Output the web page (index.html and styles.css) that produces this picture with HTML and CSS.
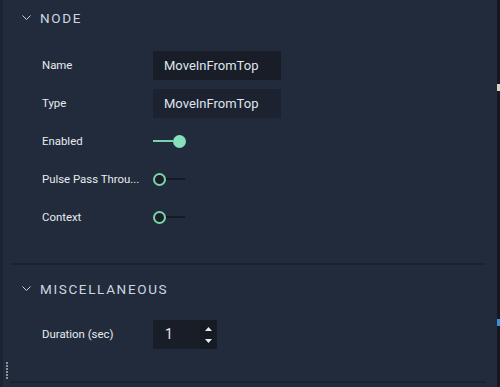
FILE: index.html
```html
<!DOCTYPE html>
<html lang="en">
<head>
    <meta charset="UTF-8">
    <title>Inspector</title>
    <link rel="stylesheet" href="styles.css">
</head>
<body>
    <div class="inspector">
        <div class="edge-left">
            <span class="grip"></span>
        </div>
        <div class="content">
            <div class="section">
                <div class="section-head">
                    <svg class="chevron" width="9" height="6" viewBox="0 0 9 6"><path d="M0.5 0.5 L4.5 4.5 L8.5 0.5" fill="none" stroke="#c9d3de" stroke-width="1"/></svg>
                    <span>NODE</span>
                </div>
                <div class="rows">
                    <div class="row">
                        <label>Name</label>
                        <div class="field">MoveInFromTop</div>
                    </div>
                    <div class="row">
                        <label>Type</label>
                        <div class="field field-ro">MoveInFromTop</div>
                    </div>
                    <div class="row">
                        <label>Enabled</label>
                        <div class="toggle on"><span class="track"></span><span class="knob"></span></div>
                    </div>
                    <div class="row">
                        <label>Pulse Pass Throu...</label>
                        <div class="toggle"><span class="knob"></span><span class="track"></span></div>
                    </div>
                    <div class="row">
                        <label>Context</label>
                        <div class="toggle"><span class="knob"></span><span class="track"></span></div>
                    </div>
                </div>
            </div>
            <div class="section misc">
                <div class="section-head">
                    <svg class="chevron" width="9" height="6" viewBox="0 0 9 6"><path d="M0.5 0.5 L4.5 4.5 L8.5 0.5" fill="none" stroke="#c9d3de" stroke-width="1"/></svg>
                    <span>MISCELLANEOUS</span>
                </div>
                <div class="rows">
                    <div class="row">
                        <label>Duration (sec)</label>
                        <div class="number">
                            <span class="value">1</span>
                            <span class="spin">
                                <svg width="7" height="4" viewBox="0 0 7 4"><path d="M3.5 0 L7 4 L0 4 Z" fill="#e6ebf0"/></svg>
                                <svg width="7" height="4" viewBox="0 0 7 4"><path d="M0 0 L7 0 L3.5 4 Z" fill="#e6ebf0"/></svg>
                            </span>
                        </div>
                    </div>
                </div>
            </div>
        </div>
        <div class="edge-right">
            <span class="port port-a"></span>
            <span class="port port-b"></span>
        </div>
    </div>
</body>
</html>
```

FILE: styles.css
```css
html, body {
    margin: 0;
    padding: 0;
}
body {
    width: 500px;
    height: 387px;
    overflow: hidden;
    background-color: #222b3b;
    font-family: Roboto, "Liberation Sans", sans-serif;
    color: #dfe6ee;
}
.inspector {
    display: flex;
    height: 387px;
}
.edge-left {
    width: 3px;
    background-color: #1c2331;
    position: relative;
}
.grip {
    position: absolute;
    left: 6px;
    top: 362px;
    width: 2px;
    height: 18px;
    background-image: repeating-linear-gradient(to bottom, #8a929c 0, #8a929c 2px, transparent 2px, transparent 3px);
}
.content {
    flex: 1;
    padding-left: 7px;
    padding-right: 11px;
}
.section {
    border-bottom: 2px solid #1b2230;
    padding-bottom: 27px;
}
.section.misc {
    padding-bottom: 28px;
}
.section-head {
    height: 36px;
    display: flex;
    align-items: center;
    padding-left: 12px;
    font-size: 13.5px;
    font-weight: 400;
    letter-spacing: 1.65px;
    color: #ccd6e1;
}
.misc .section-head {
    height: 48px;
}
.chevron {
    margin-right: 9px;
}
.rows {
    padding-top: 10px;
    padding-left: 32px;
}
.misc .rows {
    padding-top: 2px;
}
.row {
    display: flex;
    align-items: center;
    height: 38px;
}
.row label {
    width: 111px;
    font-size: 11.4px;
    color: #e6ebf0;
}
.field {
    width: 117px;
    height: 29px;
    line-height: 29px;
    padding-left: 11px;
    background-color: #181d27;
    font-size: 13px;
    color: #dfe5ec;
}
.field-ro {
    background-color: #1c2230;
}
.toggle {
    display: flex;
    align-items: center;
    width: 34px;
}
.toggle .track {
    height: 2px;
    width: 19px;
    background-color: #141a22;
}
.toggle .knob {
    box-sizing: border-box;
    width: 13px;
    height: 13px;
    border-radius: 50%;
    border: 2px solid #7bd3ab;
    background-color: #1a1f28;
}
.toggle.on .track {
    width: 20px;
    background-color: #7bd3ab;
}
.toggle.on .knob {
    border-color: #86e0bb;
    background-color: #86e0bb;
}
.number {
    display: flex;
    width: 64px;
    height: 29px;
    background-color: #181d27;
}
.number .value {
    flex: 1;
    padding-left: 12px;
    line-height: 29px;
    font-size: 14px;
    color: #e4e9ef;
}
.spin {
    width: 17px;
    display: flex;
    flex-direction: column;
    align-items: center;
    justify-content: space-between;
    padding: 7px 0 6px;
    background-color: #151a23;
}
.spin svg {
    display: block;
}
.edge-right {
    width: 3px;
    background-color: #15191f;
    position: relative;
}
.port {
    position: absolute;
    left: 0;
    width: 3px;
    height: 7px;
}
.port-a {
    top: 84px;
    background-color: #d6d3c8;
}
.port-b {
    top: 319px;
    background-color: #3d8fd6;
}
```
